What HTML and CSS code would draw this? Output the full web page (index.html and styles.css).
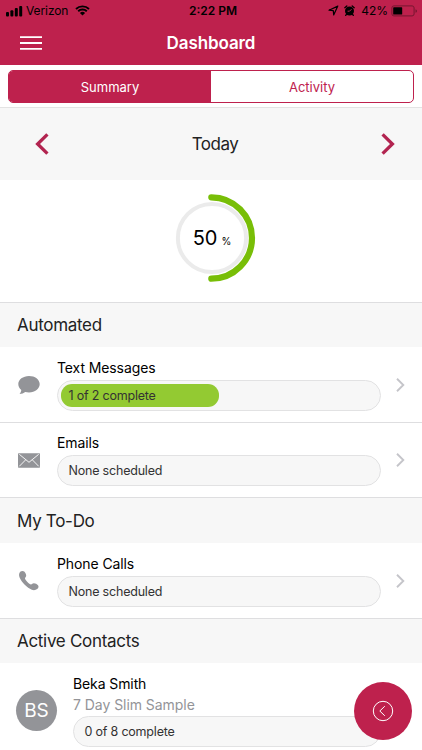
FILE: index.html
```html
<!DOCTYPE html>
<html lang="en">

<head>
    <meta charset="UTF-8">
    <meta name="viewport" content="width=device-width, initial-scale=1.0">
    <title>Dashboard</title>
    <link rel="stylesheet" href="styles.css">
</head>

<body>
    <div class="app">
        <header class="header">
            <div class="status">
                <div class="status__left">
                    <svg width="17" height="12" viewBox="0 0 17 12">
                        <rect x="0" y="7" width="3" height="4.5" rx="1"/>
                        <rect x="4.4" y="5.2" width="3" height="6.3" rx="1"/>
                        <rect x="8.8" y="3" width="3" height="8.5" rx="1"/>
                        <rect x="13.2" y="1" width="3" height="10.5" rx="1"/>
                    </svg>
                    <span class="carrier">Verizon</span>
                    <svg width="15" height="11" viewBox="0 0 15 11">
                        <path d="M1 4a9.4 9.4 0 0 1 13 0M3.2 6.3a6.2 6.2 0 0 1 8.6 0" fill="none" stroke="#000" stroke-width="1.9"/>
                        <path d="M7.5 10.6L4.9 8a3.7 3.7 0 0 1 5.2 0z"/>
                    </svg>
                </div>
                <div class="status__time">2:22 PM</div>
                <div class="status__right">
                    <svg width="11" height="11" viewBox="0 0 11 11">
                        <path d="M9.8 1.1L1 5.2l4.3.5.4 4.3z" fill="none" stroke="#000" stroke-width="1.2" stroke-linejoin="round"/>
                    </svg>
                    <svg class="alarm" width="11" height="11" viewBox="0 0 11 11">
                        <circle cx="5.5" cy="6" r="4.5"/>
                        <path d="M.8 2.7L2.8 1M10.2 2.7L8.2 1M2.4 9.4l-.7 1M8.6 9.4l.7 1" stroke="#000" stroke-width="1.3" stroke-linecap="round"/>
                        <path d="M7.5 4.2L5.5 6.2H3.6" fill="none" stroke="#be214d" stroke-width="1"/>
                    </svg>
                    <span class="percent">42%</span>
                    <svg width="27" height="12" viewBox="0 0 27 12">
                        <rect x=".9" y=".9" width="22.2" height="10" rx="2" fill="none" stroke="#761630" stroke-width="1"/>
                        <rect x="2.2" y="2.3" width="9" height="7.2" rx=".6"/>
                        <path d="M24.5 4.2v3.6q1.5-.4 1.5-1.8t-1.5-1.8z" fill="#761630"/>
                    </svg>
                </div>
            </div>
            <div class="nav">
                <svg class="nav__menu" width="22" height="14" viewBox="0 0 22 14">
                    <path d="M0 1.2h22M0 7h22M0 12.800h22" stroke="#fff" stroke-width="1.8"/>
                </svg>
                <h1 class="nav__title">Dashboard</h1>
            </div>
        </header>

        <div class="tabs">
            <div class="tabs__inner">
                <div class="tab tab_active">Summary</div>
                <div class="tab">Activity</div>
            </div>
        </div>

        <div class="date">
            <svg width="14" height="22" viewBox="0 0 14 22">
                <path d="M12.4 1.3L2.6 11l9.8 9.7" fill="none" stroke="#b22450" stroke-width="3.3"/>
            </svg>
            <div class="date__label">Today</div>
            <svg width="14" height="22" viewBox="0 0 14 22">
                <path d="M1.6 1.3L11.4 11l-9.8 9.7" fill="none" stroke="#b22450" stroke-width="3.3"/>
            </svg>
        </div>

        <div class="progress">
            <svg class="progress__ring" viewBox="0 0 90 90">
                <circle cx="45" cy="45" r="34.1" fill="none" stroke="#ebebeb" stroke-width="4"/>
                <path d="M44.3 4.3A40.7 40.7 0 0 1 44.3 85.7" fill="none" stroke="#78be07" stroke-width="6.2" stroke-linecap="round"/>
            </svg>
            <div class="progress__value">50<span class="progress__unit">%</span></div>
        </div>

        <div class="section">Automated</div>
        <div class="row">
            <div class="row__icon">
                <svg width="22" height="20" viewBox="0 0 22 20">
                    <path d="M11 1C5 1 .3 4.6.3 9.1c0 2.3 1.1 4.4 3 5.9-.2 1.6-.9 2.9-1.8 4 2.2-.1 4.2-.8 5.7-2 1.2.3 2.5.5 3.8.5 6 0 10.7-3.8 10.7-8.400S17 1 11 1z" fill="#939498"/>
                </svg>
            </div>
            <div class="row__body">
                <div class="row__title">Text Messages</div>
                <div class="bar">
                    <div class="bar__fill" style="width: 50%"></div>
                    <span class="bar__text">1 of 2 complete</span>
                </div>
            </div>
            <svg class="row__arrow" width="9" height="14" viewBox="0 0 9 14">
                <path d="M1 .8L7.3 7 1 13.2" fill="none" stroke="#c5c5ca" stroke-width="1.9"/>
            </svg>
        </div>
        <div class="row">
            <div class="row__icon">
                <svg width="22" height="15" viewBox="0 0 22 15">
                    <rect width="22" height="14.5" y=".2" rx=".7" fill="#939498"/>
                    <path d="M1.3 1.3L11 9.3l9.7-8M1.3 13.3l6.3-6.4M20.7 13.3l-6.3-6.4" fill="none" stroke="#fff" stroke-width=".9"/>
                </svg>
            </div>
            <div class="row__body">
                <div class="row__title">Emails</div>
                <div class="bar"><span class="bar__text">None scheduled</span></div>
            </div>
            <svg class="row__arrow" width="9" height="14" viewBox="0 0 9 14">
                <path d="M1 .8L7.3 7 1 13.2" fill="none" stroke="#c5c5ca" stroke-width="1.9"/>
            </svg>
        </div>

        <div class="section section_todo">My To-Do</div>
        <div class="row">
            <div class="row__icon">
                <svg width="22" height="22" viewBox="0 0 22 22">
                    <path d="M2.200 1.800C3.400.7 5.400.5 6.500 1.800c1 1.200 1.800 2.700 1.700 4 0 1.200-1.300 1.700-1.200 2.700.2 1.600 4.300 5.800 6 5.900 1 0 1.700-1.200 2.900-1.100 1.500.1 3.100.900 4.100 1.900 1 1.100.5 2.900-.8 3.900-1.400 1.100-3.600 1.400-5.400.600C9.200 17.700 3.700 12.500 1.500 7.200.8 5.300.9 3.100 2.200 1.800z" fill="#939498"/>
                </svg>
            </div>
            <div class="row__body">
                <div class="row__title">Phone Calls</div>
                <div class="bar"><span class="bar__text">None scheduled</span></div>
            </div>
            <svg class="row__arrow" width="9" height="14" viewBox="0 0 9 14">
                <path d="M1 .8L7.3 7 1 13.2" fill="none" stroke="#c5c5ca" stroke-width="1.9"/>
            </svg>
        </div>

        <div class="section">Active Contacts</div>
        <div class="contact">
            <div class="avatar">BS</div>
            <div class="contact__body">
                <div class="row__title">Beka Smith</div>
                <div class="contact__plan">7 Day Slim Sample</div>
                <div class="bar"><span class="bar__text">0 of 8 complete</span></div>
            </div>
        </div>

        <button class="fab" aria-label="Open menu">
            <svg width="22" height="22" viewBox="0 0 22 22">
                <circle cx="11" cy="11" r="9.7" fill="none" stroke="#fff" stroke-width="1"/>
                <path d="M12.8 6.2L7.8 11l5 4.8" fill="none" stroke="#fff" stroke-width="1"/>
            </svg>
        </button>
    </div>
</body>

</html>
```
FILE: styles.css
```css
* {
    box-sizing: border-box;
    margin: 0;
    padding: 0;
}

body {
    font-family: Inter, "Liberation Sans", sans-serif;
    background: #fff;
    color: #111;
    overflow: hidden;
}

svg {
    display: block;
    flex-shrink: 0;
}

.app {
    position: relative;
    width: 100%;
    height: 750px;
    overflow: hidden;
}

.header {
    height: 65px;
    background: #be214d;
}

.status {
    height: 21px;
    padding: 0 4px 0 6px;
    display: grid;
    grid-template-columns: 1fr auto 1fr;
    align-items: center;
    font-size: 12px;
    color: #000;
}

.status__left,
.status__right {
    display: flex;
    align-items: center;
}

.status__right {
    justify-content: flex-end;
}

.carrier {
    margin: 0 7px 0 3px;
    letter-spacing: -0.1px;
}

.status__time {
    padding-left: 2px;
    font-weight: 600;
}

.alarm {
    margin: 0 6px 0 5px;
}

.percent {
    margin-right: 3px;
}

.nav {
    height: 44px;
    display: grid;
    grid-template-columns: 1fr auto 1fr;
    align-items: center;
    padding: 0 20px;
}

.nav__title {
    font-size: 17px;
    font-weight: 600;
    letter-spacing: -0.1px;
    color: #fff;
}

.tabs {
    height: 43px;
    padding: 5px 8px 0;
    border-bottom: 1px solid #e3e3e3;
}

.tabs__inner {
    display: flex;
    height: 33px;
    border: 1px solid #be214d;
    border-radius: 5px;
    overflow: hidden;
}

.tab {
    flex: 1;
    display: flex;
    align-items: center;
    justify-content: center;
    font-size: 13px;
    color: #be214d;
}

.tab_active {
    background: #be214d;
    color: #fff;
}

.date {
    height: 72px;
    padding: 0 27px 0 35px;
    display: flex;
    align-items: center;
    justify-content: space-between;
    background: #f7f7f7;
}

.date__label {
    font-size: 17px;
    letter-spacing: -0.5px;
    color: #222;
}

.progress {
    height: 122px;
    display: grid;
    place-items: center;
    padding: 0 0 6px 2px;
}

.progress__ring,
.progress__value {
    grid-area: 1 / 1;
}

.progress__ring {
    width: 90px;
    height: 90px;
}

.progress__value {
    font-size: 20px;
    color: #000;
}

.progress__unit {
    margin-left: 4px;
    font-size: 10px;
}

.section {
    height: 45px;
    padding-left: 17px;
    border-top: 1px solid #dedee0;
    background: #f7f7f7;
    font-size: 17px;
    letter-spacing: -0.3px;
    line-height: 45px;
    color: #222;
}

.section_todo {
    height: 46px;
    line-height: 46px;
}

.row {
    height: 75px;
    display: flex;
    padding: 0 17px 0 18px;
}

.row + .row {
    border-top: 1px solid #dedee0;
}

.row + .row .row__body {
    padding-top: 11px;
}

.row__icon {
    width: 22px;
    display: flex;
    align-items: center;
    justify-content: center;
}

.row__body {
    flex: 1;
    margin: 0 15px 0 17px;
    padding-top: 12px;
}

.row__title {
    font-size: 14px;
    letter-spacing: -0.1px;
    line-height: 18px;
    color: #000;
}

.row__arrow {
    align-self: center;
}

.bar {
    display: grid;
    align-items: center;
    height: 31px;
    margin-top: 3px;
    padding: 0 3px;
    border: 1px solid #e2e2e3;
    border-radius: 16px;
    background: #f7f7f7;
}

.bar__fill,
.bar__text {
    grid-area: 1 / 1;
}

.bar__fill {
    height: 23px;
    border-radius: 11px;
    background: #93ca32;
}

.bar__text {
    padding-left: 7.5px;
    font-size: 12.5px;
    letter-spacing: -0.2px;
    color: #333;
}

.contact {
    display: flex;
    padding: 12px 41px 0 16px;
}

.avatar {
    width: 41px;
    height: 41px;
    margin: 15px 16px 0 0;
    border-radius: 50%;
    background: #939498;
    color: #fff;
    font-size: 19px;
    line-height: 42px;
    text-align: center;
}

.contact__body {
    flex: 1;
}

.contact__plan {
    margin-top: 3px;
    font-size: 14px;
    letter-spacing: -0.05px;
    line-height: 18px;
    color: #939498;
}

.contact .bar {
    margin-top: 2px;
}

.fab {
    position: absolute;
    right: 10px;
    bottom: 10px;
    width: 58px;
    height: 58px;
    display: flex;
    align-items: center;
    justify-content: center;
    border: none;
    border-radius: 50%;
    background: #be214d;
}
```
